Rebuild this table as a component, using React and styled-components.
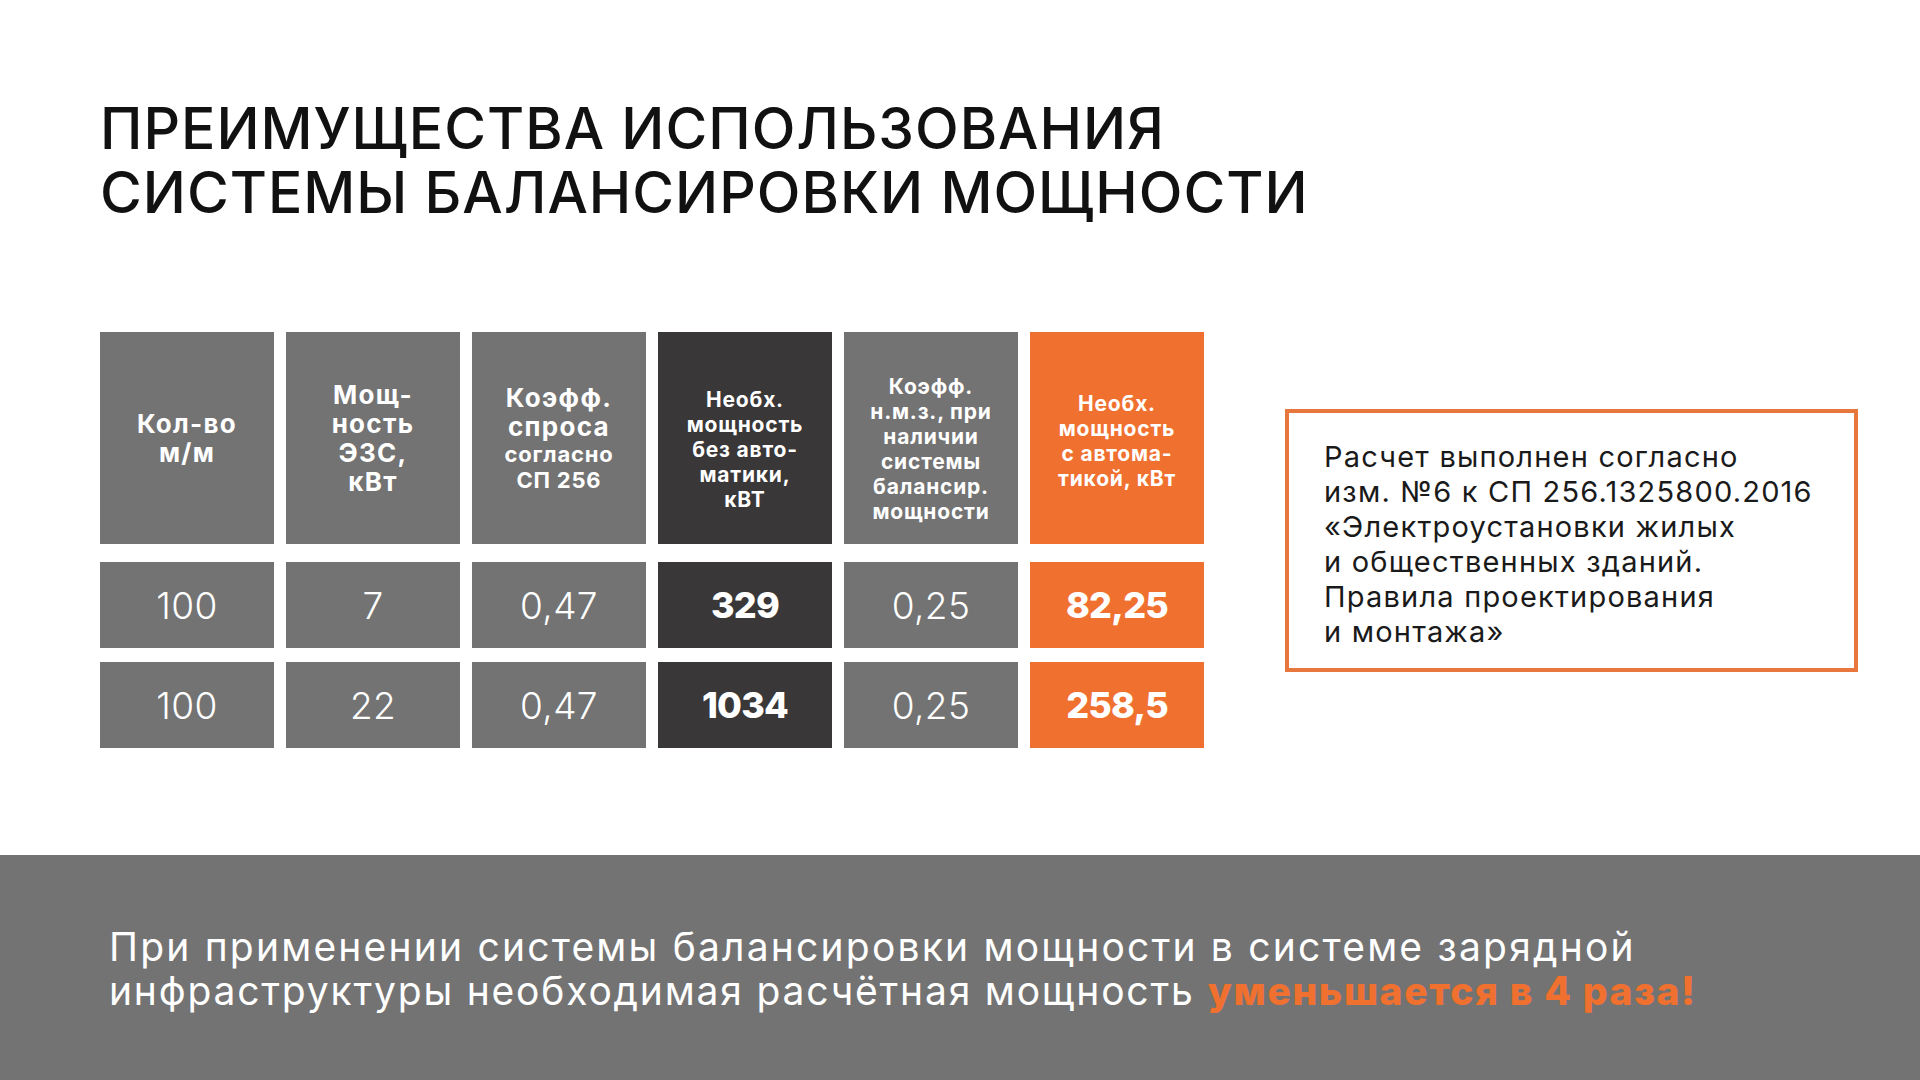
import React from "react";
import styled, { createGlobalStyle } from "styled-components";

const GlobalStyle = createGlobalStyle`
  html, body {
    margin: 0;
    padding: 0;
    background: #ffffff;
  }
  body {
    font-family: "Inter", "Noto Sans", sans-serif;
  }
`;

const tones = {
  gray: "#737373",
  dark: "#393738",
  orange: "#f07030",
};

const Slide = styled.div`
  width: 1920px;
  height: 1080px;
  display: flex;
  flex-direction: column;
  background: #fff;
  overflow: hidden;
`;

const Title = styled.h1`
  margin: 0;
  padding: 97px 0 0 100px;
  font-family: "Inter", "Noto Sans", sans-serif;
  font-weight: 500;
  font-size: 57px;
  line-height: 64px;
  letter-spacing: 1px;
  color: #111;
  text-transform: uppercase;
`;

const Main = styled.div`
  flex: 1;
  display: flex;
  align-items: center;
  gap: 81px;
  padding: 0 0 0 100px;
`;

const Table = styled.div`
  display: flex;
  flex-direction: column;
  gap: 14px;
`;

const Row = styled.div`
  display: grid;
  grid-template-columns: repeat(6, 174px);
  column-gap: 12px;
  height: ${(p) => p.$height}px;
  margin-bottom: ${(p) => p.$after || 0}px;
`;

const Cell = styled.div`
  background: ${(p) => tones[p.$tone]};
  color: #fff;
  display: flex;
  flex-direction: column;
  align-items: center;
  justify-content: center;
  text-align: center;
  box-sizing: border-box;
  padding-top: ${(p) => p.$shift || 0}px;
`;

const HeadText = styled.div`
  font-weight: 700;
  font-size: ${(p) => p.$size || 26}px;
  line-height: ${(p) => p.$lh || 29}px;
  letter-spacing: ${(p) => (p.$size ? 0.8 : 1.3)}px;
`;

const Value = styled.div`
  font-weight: ${(p) => (p.$strong ? 800 : 300)};
  font-size: ${(p) => (p.$strong ? 36 : 37)}px;
  letter-spacing: ${(p) => (p.$strong ? "-0.8px" : "0.4px")};
`;

const Note = styled.div`
  width: 573px;
  height: 263px;
  box-sizing: border-box;
  border: 4px solid #e8773d;
  padding: 8px 0 0 35px;
  display: flex;
  align-items: center;
  font-size: 29px;
  line-height: 35px;
  color: #1a1a1a;
  letter-spacing: 1.2px;
`;

const Band = styled.div`
  height: 225px;
  background: #737373;
  display: flex;
  align-items: center;
  padding: 2px 0 0 109px;
  box-sizing: border-box;
`;

const BandText = styled.p`
  margin: 0;
  color: #fff;
  font-size: 39px;
  line-height: 44px;
  font-weight: 400;
  letter-spacing: 2.2px;
`;

const Lead = styled.span`
  letter-spacing: 1.8px;
`;

const Accent = styled.span`
  color: #f07030;
  font-weight: 800;
  letter-spacing: 1.6px;
`;

const head = [
  { tone: "gray", lines: [["Кол-во", "м/м"]] },
  { tone: "gray", lines: [["Мощ-", "ность", "ЭЗС,", "кВт"]] },
  {
    tone: "gray",
    lines: [
      ["Коэфф.", "спроса"],
      ["согласно", "СП 256", 22, 26],
    ],
  },
  {
    tone: "dark",
    shift: 22,
    lines: [["Необх.", "мощность", "без авто-", "матики,", "кВТ", 21, 25]],
  },
  {
    tone: "gray",
    shift: 22,
    lines: [
      ["Коэфф.", "н.м.з., при", "наличии", "системы", "балансир.", "мощности", 21, 25],
    ],
  },
  {
    tone: "orange",
    shift: 6,
    lines: [["Необх.", "мощность", "с автома-", "тикой, кВт", 21, 25]],
  },
];

const rows = [
  ["100", "7", "0,47", "329", "0,25", "82,25"],
  ["100", "22", "0,47", "1034", "0,25", "258,5"],
];

const rowTones = ["gray", "gray", "gray", "dark", "gray", "orange"];

function HeadCell({ tone, shift, lines }) {
  return (
    <Cell $tone={tone} $shift={shift}>
      {lines.map((group, i) => {
        const words = group.filter((w) => typeof w === "string");
        const nums = group.filter((w) => typeof w === "number");
        return (
          <HeadText key={i} $size={nums[0]} $lh={nums[1]}>
            {words.map((w, j) => (
              <React.Fragment key={j}>
                {w}
                {j < words.length - 1 && <br />}
              </React.Fragment>
            ))}
          </HeadText>
        );
      })}
    </Cell>
  );
}

export default function App() {
  return (
    <Slide>
      <GlobalStyle />
      <Title>
        Преимущества использования
        <br />
        системы балансировки мощности
      </Title>
      <Main>
        <Table>
          <Row $height={212} $after={4}>
            {head.map((h, i) => (
              <HeadCell key={i} tone={h.tone} shift={h.shift} lines={h.lines} />
            ))}
          </Row>
          {rows.map((r, i) => (
            <Row key={i} $height={86}>
              {r.map((v, j) => (
                <Cell key={j} $tone={rowTones[j]}>
                  <Value $strong={rowTones[j] !== "gray"}>{v}</Value>
                </Cell>
              ))}
            </Row>
          ))}
        </Table>
        <Note>
          <div>
            Расчет выполнен согласно
            <br />
            изм. №6 к СП 256.1325800.2016
            <br />
            «Электроустановки жилых
            <br />
            и общественных зданий.
            <br />
            Правила проектирования
            <br />и монтажа»
          </div>
        </Note>
      </Main>
      <Band>
        <BandText>
          При применении системы балансировки мощности в системе зарядной
          <br />
          <Lead>инфраструктуры необходимая расчётная мощность</Lead>{" "}
          <Accent>уменьшается в 4 раза!</Accent>
        </BandText>
      </Band>
    </Slide>
  );
}
